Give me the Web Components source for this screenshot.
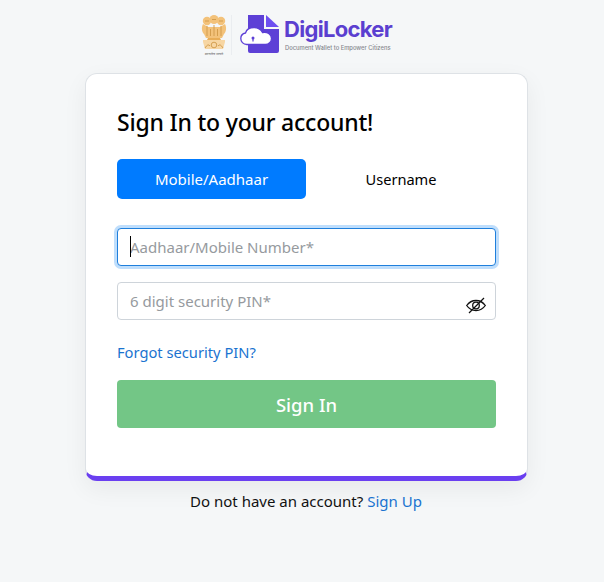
<!DOCTYPE html>
<html lang="en">
<head>
<meta charset="utf-8">
<title>DigiLocker - Sign In</title>
<style>
  html, body {margin:0; padding:0;}
  body {background:#f5f7f8; font-family:"Noto Sans","Open Sans",sans-serif; color:#000;}
  #page {display:flex; flex-flow:column; align-items:center; min-height:582px;}
</style>
</head>
<body>
<div id="page">
  <dl-logo></dl-logo>
  <dl-card>
    <dl-title>Sign In to your account!</dl-title>
    <dl-tabs></dl-tabs>
    <dl-field placeholder="Aadhaar/Mobile Number*" focused></dl-field>
    <dl-field placeholder="6 digit security PIN*" eye></dl-field>
    <dl-link>Forgot security PIN?</dl-link>
    <dl-button>Sign In</dl-button>
  </dl-card>
  <dl-footer></dl-footer>
</div>
<script>
customElements.define('dl-logo', class extends HTMLElement {
    constructor() {
	super();
	const shadowRoot = this.attachShadow({mode: 'open'});
	shadowRoot.innerHTML = `
<style>
  :host {display:flex; align-items:flex-start; box-sizing:border-box; height:73px; width:192px; padding-top:15px; margin-left:-12px;}
  #emblem {width:28px; height:42px; flex:none;}
  #rule {width:1px; height:40px; background:#eaedf0; margin:0 8px 0 3px; flex:none;}
  #mark {width:40px; height:38px; flex:none; margin-right:4px;}
  #words {display:flex; flex-flow:column; margin-top:1px;}
  #name {font:700 22px/26px Inter,"Liberation Sans",sans-serif; color:#5b3fd0; letter-spacing:-.7px; white-space:nowrap;}
  #tag {font:500 5.800px/8px Inter,"Liberation Sans",sans-serif; color:#85878e; white-space:nowrap; margin:2px 0 0 1px;}
</style>
<svg id="emblem" viewBox="0 0 28 42">
  <g fill="#f3c27a">
    <circle cx="7" cy="6" r="4.200"/><circle cx="21" cy="6" r="4.200"/><circle cx="14" cy="4.500" r="4.500"/>
    <path d="M3 9c-2 4-1 8 1 10l2 4h16l2-4c2-2 3-6 1-10l-5 3H8z"/>
    <path d="M8 23h12l1 2H7z" fill="#e8ad57"/>
    <path d="M3 25h22v2l-2 7H5l-2-7z" fill="#f7d6a3"/>
  </g>
  <g fill="none" stroke="#d09a4a" stroke-width=".9">
    <path d="M7 11v10M14 10v11M21 11v10M10.500 14v7M17.500 14v7M5 6h4M19 6h4M12 4.500h4"/>
    <circle cx="14" cy="30" r="2.800"/><path d="M5 33q3-5 5-2M23 33q-3-5-5-2"/>
  </g>
  <text x="14" y="40" text-anchor="middle" font-size="3.800" fill="#555" font-family="'Noto Sans',sans-serif">सत्यमेव जयते</text>
</svg>
<div id="rule"></div>
<svg id="mark" viewBox="0 0 40 38">
  <path d="M8 0h16v14h15v22a2 2 0 0 1-2 2H10a2 2 0 0 1-2-2z" fill="#5d40d6"/>
  <path d="M26 0L39 12H26z" fill="#6d4ff0"/>
  <path d="M7 29.500C3 29.500.8 26.500.8 23.500.8 20.500 3 18.500 5.500 18 6.500 14.500 10 12.500 14 12.500 18 12.500 21 14.500 22.500 17.500 27 16.500 31.500 19 31.500 23.500 31.500 27 28.500 29.500 25.500 29.500z" fill="#fff" stroke="#5d40d6" stroke-width="1.300"/>
  <circle cx="13" cy="23" r="1.500" fill="#5d40d6"/><rect x="12.400" y="23" width="1.200" height="3.500" fill="#5d40d6"/>
</svg>
<div id="words">
  <div id="name">DigiLocker</div>
  <div id="tag">Document Wallet to Empower Citizens</div>
</div>`;
    }
});

customElements.define('dl-card', class extends HTMLElement {
    constructor() {
	super();
	const shadowRoot = this.attachShadow({mode: 'open'});
	shadowRoot.innerHTML = `
<style>
  :host {display:flex; flex-flow:column; box-sizing:border-box; width:443px; height:408px; margin-left:9px; padding:32px 31px 0; background:#fff;
    border:1px solid #dee2e6; border-bottom:5px solid #6a3ff0; border-radius:12px; box-shadow:0 8px 24px rgba(0,0,0,.06);}
</style>
<slot></slot>`;
    }
});

customElements.define('dl-title', class extends HTMLElement {
    constructor() {
	super();
	const shadowRoot = this.attachShadow({mode: 'open'});
	shadowRoot.innerHTML = `
<style>
  :host {display:block; font-size:23px; font-weight:500; letter-spacing:-.2px; line-height:32px; height:32px; margin-bottom:21px; color:#000; white-space:nowrap;}
</style>
<slot></slot>`;
    }
});

customElements.define('dl-tabs', class extends HTMLElement {
    constructor() {
	super();
	const shadowRoot = this.attachShadow({mode: 'open'});
	shadowRoot.innerHTML = `
<style>
  :host {display:grid; grid-template-columns:189px 190px; height:40px; margin-bottom:29px; font-size:15px;}
  div {display:flex; align-items:center; justify-content:center; border-radius:5px;}
  .on {background:#007bff; color:#fff;}
  .off {font-size:14.600px;}
</style>
<div class="on">Mobile/Aadhaar</div>
<div class="off">Username</div>`;
    }
});

customElements.define('dl-field', class extends HTMLElement {
    static get observedAttributes() { return ['placeholder']; }
    attributeChangedCallback() {
	this.shadowRoot.querySelector('input').placeholder = this.getAttribute('placeholder');
    }
    constructor() {
	super();
	const shadowRoot = this.attachShadow({mode: 'open'});
	shadowRoot.innerHTML = `
<style>
  :host {display:block; position:relative; height:38px; margin-bottom:16px;}
  input {display:block; box-sizing:border-box; width:100%; height:38px; padding:0 12px; border:1px solid #ced4da; border-radius:4px; background:#fff; font:15px "Noto Sans","Open Sans",sans-serif; outline:0;}
  input::placeholder {color:#969a9e; opacity:1;}
  :host([focused]) input {border-color:#1f7fdc; box-shadow:0 0 0 3px #bfdefc;}
  #caret, #eye {display:none;}
  :host([focused]) #caret {display:block; position:absolute; left:13px; top:8px; width:1px; height:21px; background:#000;}
  :host([eye]) #eye {display:block; position:absolute; right:10px; top:15px; width:20px; height:17px;}
</style>
<input type="text">
<span id="caret"></span>
<svg id="eye" viewBox="0 0 20 17" fill="none" stroke="#111" stroke-width="1.300">
  <path d="M.7 8.500C3 5.200 6 3.500 10 3.500s7 1.700 9.300 5C17 11.800 14 13.500 10 13.500S3 11.800.7 8.500z"/>
  <circle cx="10" cy="8.500" r="3.300"/>
  <path d="M3 16L18 1"/>
</svg>`;
    }
});

customElements.define('dl-link', class extends HTMLElement {
    constructor() {
	super();
	const shadowRoot = this.attachShadow({mode: 'open'});
	shadowRoot.innerHTML = `
<style>
  :host {display:block; font-size:14.700px; line-height:22px; height:22px; margin:5px 0 17px; color:#1a73d0;}
</style>
<slot></slot>`;
    }
});

customElements.define('dl-button', class extends HTMLElement {
    constructor() {
	super();
	const shadowRoot = this.attachShadow({mode: 'open'});
	shadowRoot.innerHTML = `
<style>
  :host {display:flex; align-items:center; justify-content:center; height:48px; border-radius:4px; background:#73c686; color:#fff; font-size:18.500px; font-weight:500;}
</style>
<slot></slot>`;
    }
});

customElements.define('dl-footer', class extends HTMLElement {
    constructor() {
	super();
	const shadowRoot = this.attachShadow({mode: 'open'});
	shadowRoot.innerHTML = `
<style>
  :host {display:block; margin:9px 0 0 8px; font-size:15px; line-height:22px; color:#111;}
  span {color:#1a73d0;}
</style>
Do not have an account? <span>Sign Up</span>`;
    }
});
</script>
</body>
</html>
